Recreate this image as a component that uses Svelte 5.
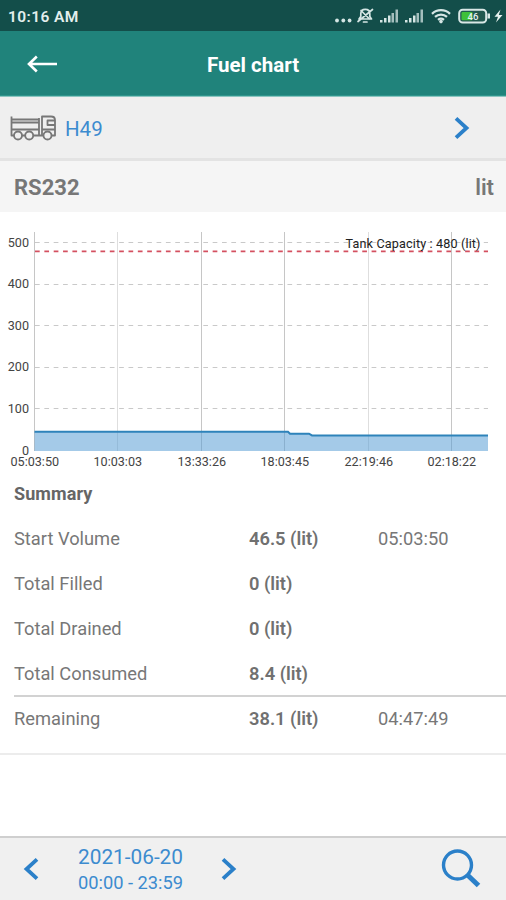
<script>
  const rows = [
    { label: 'Start Volume', value: '46.5 (lit)', time: '05:03:50' },
    { label: 'Total Filled', value: '0 (lit)', time: '' },
    { label: 'Total Drained', value: '0 (lit)', time: '' },
    { label: 'Total Consumed', value: '8.4 (lit)', time: '' },
    { label: 'Remaining', value: '38.1 (lit)', time: '04:47:49' }
  ];
  // Chart geometry: y = 238.5 at volume 0, 41.5px per 100 litres
  const levels = [500, 400, 300, 200, 100, 0];
  const y = (v) => 238.5 - v * 0.4155;
  const ticks = [
    { x: 34.5, t: '05:03:50' },
    { x: 117.5, t: '10:03:03' },
    { x: 201.5, t: '13:33:26' },
    { x: 284.5, t: '18:03:45' },
    { x: 368.5, t: '22:19:46' },
    { x: 451.5, t: '02:18:22' }
  ];
</script>

<div class="screen">
  <div class="status">
    <span class="clock">10:16 AM</span>
    <svg class="tray" width="176" height="31" viewBox="330 0 176 31">
      <g fill="#d5e6e4">
        <circle cx="337" cy="20.5" r="1.9" /><circle cx="343.3" cy="20.5" r="1.9" /><circle cx="349.6" cy="20.5" r="1.9" />
      </g>
      <g fill="none" stroke="#d5e6e4" stroke-width="1.7" stroke-linecap="round" stroke-linejoin="round">
        <path d="M359 19h12.500l-1.700-2.500v-2.700c0-2.700-1.800-4.400-4.500-4.400s-4.500 1.700-4.500 4.400v2.700zM363.500 22h3.500M358 21.500L372.500 9.500M361 10.500l8.500 8.500" />
      </g>
      <g fill="#d5e6e4">
        <path d="M380 20h2.500v2.500H380zM384 18h2.500v4.500H384zM388 15.500h2.500v7H388z" />
        <path d="M391.500 13h2.500v9.500h-2.500zM395.500 9.500h2.500v13h-2.500z" opacity=".75" />
        <path d="M405 20h2.500v2.500H405zM409 18h2.500v4.500H409zM413 15.500h2.500v7H413z" />
        <path d="M416.500 13h2.500v9.500h-2.500zM420.500 9.500h2.500v13h-2.500z" opacity=".75" />
      </g>
      <g fill="none" stroke="#d5e6e4" stroke-width="2.300">
        <path d="M432 13.800a13 13 0 0 1 18 0M435 16.900a9 9 0 0 1 12 0M438 19.800a5 5 0 0 1 6 0" />
      </g>
      <circle cx="441" cy="21.600" r="1.800" fill="#d5e6e4" />
      <rect x="459.200" y="9.700" width="27" height="12.800" rx="3.500" fill="#20584f" stroke="#d9e8e6" stroke-width="2" />
      <rect x="461.500" y="12" width="11" height="8.300" rx="1" fill="#3fc13a" />
      <rect x="487.500" y="13.500" width="2.500" height="5" fill="#d9e8e6" />
      <text x="473" y="19.600" text-anchor="middle" font-size="9.500" font-weight="500" fill="#e6f2ef">46</text>
      <path d="M500.500 9.500l-6 7.200h3.500l-2 5.800 6.500-7.500h-3.700z" fill="#e6f2ef" />
    </svg>
  </div>

  <header class="bar">
    <svg class="back" width="32" height="20" viewBox="0 0 32 20" fill="none" stroke="#fff" stroke-width="2.600">
      <path d="M2 10h28M9.800 2.500L2 10l7.800 7.500" />
    </svg>
    <h1>Fuel chart</h1>
  </header>

  <div class="vehicle">
    <svg width="46" height="26" viewBox="0 0 46 26" fill="none" stroke="#777" stroke-width="1.800" stroke-linejoin="round">
      <path d="M1.500 1.500v19h2.500M1.500 4.500h27M1.500 7.500h27M1.500 14.500h27M29 3v17.500h3M32 20.500V1.500h9c2.500 0 4 1 4 3.500v15.500h-3M12 20.500h3M23 20.500h10M32 14.500h13M45 5.500h-7.500v4.500H45" />
      <circle cx="8" cy="20.500" r="4" /><circle cx="19.200" cy="20.500" r="4" /><circle cx="37.500" cy="20.500" r="4" />
    </svg>
    <span class="name">H49</span>
    <svg class="next" width="18" height="24" viewBox="0 0 18 24" fill="none" stroke="#2b80c9" stroke-width="3.800"><path d="M3 2.300L13.500 12 3 21.700" /></svg>
  </div>

  <div class="sensor"><span>RS232</span><span class="unit">lit</span></div>

  <svg class="chart" width="506" height="263" viewBox="0 0 506 263">
    {#each levels as v}
      {#if v > 0}
        <line x1="35" x2="488" y1={Math.floor(y(v)) + 0.5} y2={Math.floor(y(v)) + 0.5} stroke="#c9c9c9" stroke-dasharray="4.700 4.650" />
      {/if}
      <text x="29" y={y(v) + 4} text-anchor="end">{v}</text>
    {/each}
    {#each ticks as k, i}
      <line x1={k.x} x2={k.x} y1="20" y2="239" stroke={i === 1 || i === 4 ? '#dedede' : '#c6c6c6'} />
      <text x={k.x + 0.300} y="254" text-anchor="middle">{k.t}</text>
    {/each}
    <path d="M34.500 219.700H288l2 2h19l3 1.700h176V239H34.500z" fill="#5a9fd6" fill-opacity=".55" />
    <path d="M34.500 219.700H288l2 2h19l3 1.700h176" fill="none" stroke="#2e83ba" stroke-width="2" />
    <line x1="35" x2="488" y1="39.300" y2="39.300" stroke="#d45060" stroke-width="1.700" stroke-dasharray="4.700 4.650" />
    <text class="cap" x="480.500" y="36" text-anchor="end" textLength="135">Tank Capacity : 480 (lit)</text>
  </svg>

  <section class="summary">
    <h2>Summary</h2>
    {#each rows as r, i}
      <div class="row" class:last={i === 4}>
        <span>{r.label}</span><b>{r.value}</b><span>{r.time}</span>
      </div>
    {/each}
  </section>

  <footer>
    <svg width="18" height="24" viewBox="0 0 18 24" fill="none" stroke="#2b80c9" stroke-width="3.800"><path d="M15 2.300L4.500 12 15 21.700" /></svg>
    <div class="period"><span class="date">2021-06-20</span><span class="hours">00:00 - 23:59</span></div>
    <svg width="18" height="24" viewBox="0 0 18 24" fill="none" stroke="#2b80c9" stroke-width="3.800"><path d="M3 2.300L13.500 12 3 21.700" /></svg>
    <svg class="search" width="40" height="40" viewBox="0 0 40 40" fill="none" stroke="#2b80c9">
      <circle cx="16.500" cy="16" r="14" stroke-width="3.400" /><path d="M26.500 26L37.500 36.500" stroke-width="5" />
    </svg>
  </footer>
</div>

<style>
  :global(body) { margin: 0; }
  .screen {
    width: 506px; height: 900px; display: flex; flex-direction: column;
    background: #fff; overflow: hidden;
    font-family: Roboto, "Liberation Sans", sans-serif; color: #777;
  }
  svg { display: block; flex: none; }
  .status {
    height: 31px; flex: none; background: #134e4a; color: #e3efed;
    display: flex; align-items: center; justify-content: space-between; padding-left: 8px;
  }
  .clock { font-size: 15.500px; font-weight: 600; padding-top: 2px; letter-spacing: .4px; }
  .bar {
    height: 65px; flex: none; box-sizing: border-box; background: #20837b; border-bottom: 1px solid #2f958c;
    display: grid; grid-template-columns: 120px 1fr 120px; align-items: center;
  }
  .back { margin: 1px 0 0 27px; }
  h1 { margin: 0; color: #fff; font-size: 20.500px; font-weight: 700; text-align: center; padding-top: 3px; }
  .vehicle {
    height: 65px; flex: none; box-sizing: border-box; background: #efefef;
    border-top: 1px solid #8cc5c0; border-bottom: 3px solid #e3e3e3;
    display: flex; align-items: center; padding: 0 35px 0 10px;
  }
  .name { color: #3c8bcf; font-size: 20.500px; margin-left: 9px; padding-top: 3px; }
  .next { margin: 1px 0 0 auto; }
  .sensor {
    height: 51px; flex: none; box-sizing: border-box; background: #f5f5f5;
    display: flex; align-items: center; justify-content: space-between;
    padding: 2px 12px 0 14px; font-size: 22px; font-weight: 700;
  }
  .unit { font-weight: 600; }
  .chart text { font-size: 12.600px; fill: #444; }
  .chart .cap { fill: #222; }
  .summary { flex: none; height: 278px; border-bottom: 2px solid #ececec; }
  h2 { margin: 0 14px; padding-top: 7px; height: 34px; font-size: 18px; line-height: 24px; letter-spacing: .1px; font-weight: 700; color: #666; }
  .row {
    margin-left: 14px; height: 45px; display: grid; grid-template-columns: 235px 129px 1fr;
    align-items: center; font-size: 18.300px;
  }
  .row b { font-weight: 600; color: #707070; }
  .last { box-sizing: border-box; border-top: 2px solid #d2d2d2; margin-top: -1px; }
  footer {
    margin-top: auto; height: 64px; box-sizing: border-box; background: #f0f0f0; border-top: 2px solid #cfcfcf;
    display: flex; align-items: center; padding: 0 25px 0 22px;
  }
  .period { width: 105px; margin: 2px 37px 0 38px; display: flex; flex-direction: column; align-items: center; color: #3c8bcf; white-space: nowrap; }
  .date { font-size: 20.800px; line-height: 26px; }
  .hours { font-size: 18.300px; line-height: 26px; }
  .search { margin-left: auto; }
</style>
